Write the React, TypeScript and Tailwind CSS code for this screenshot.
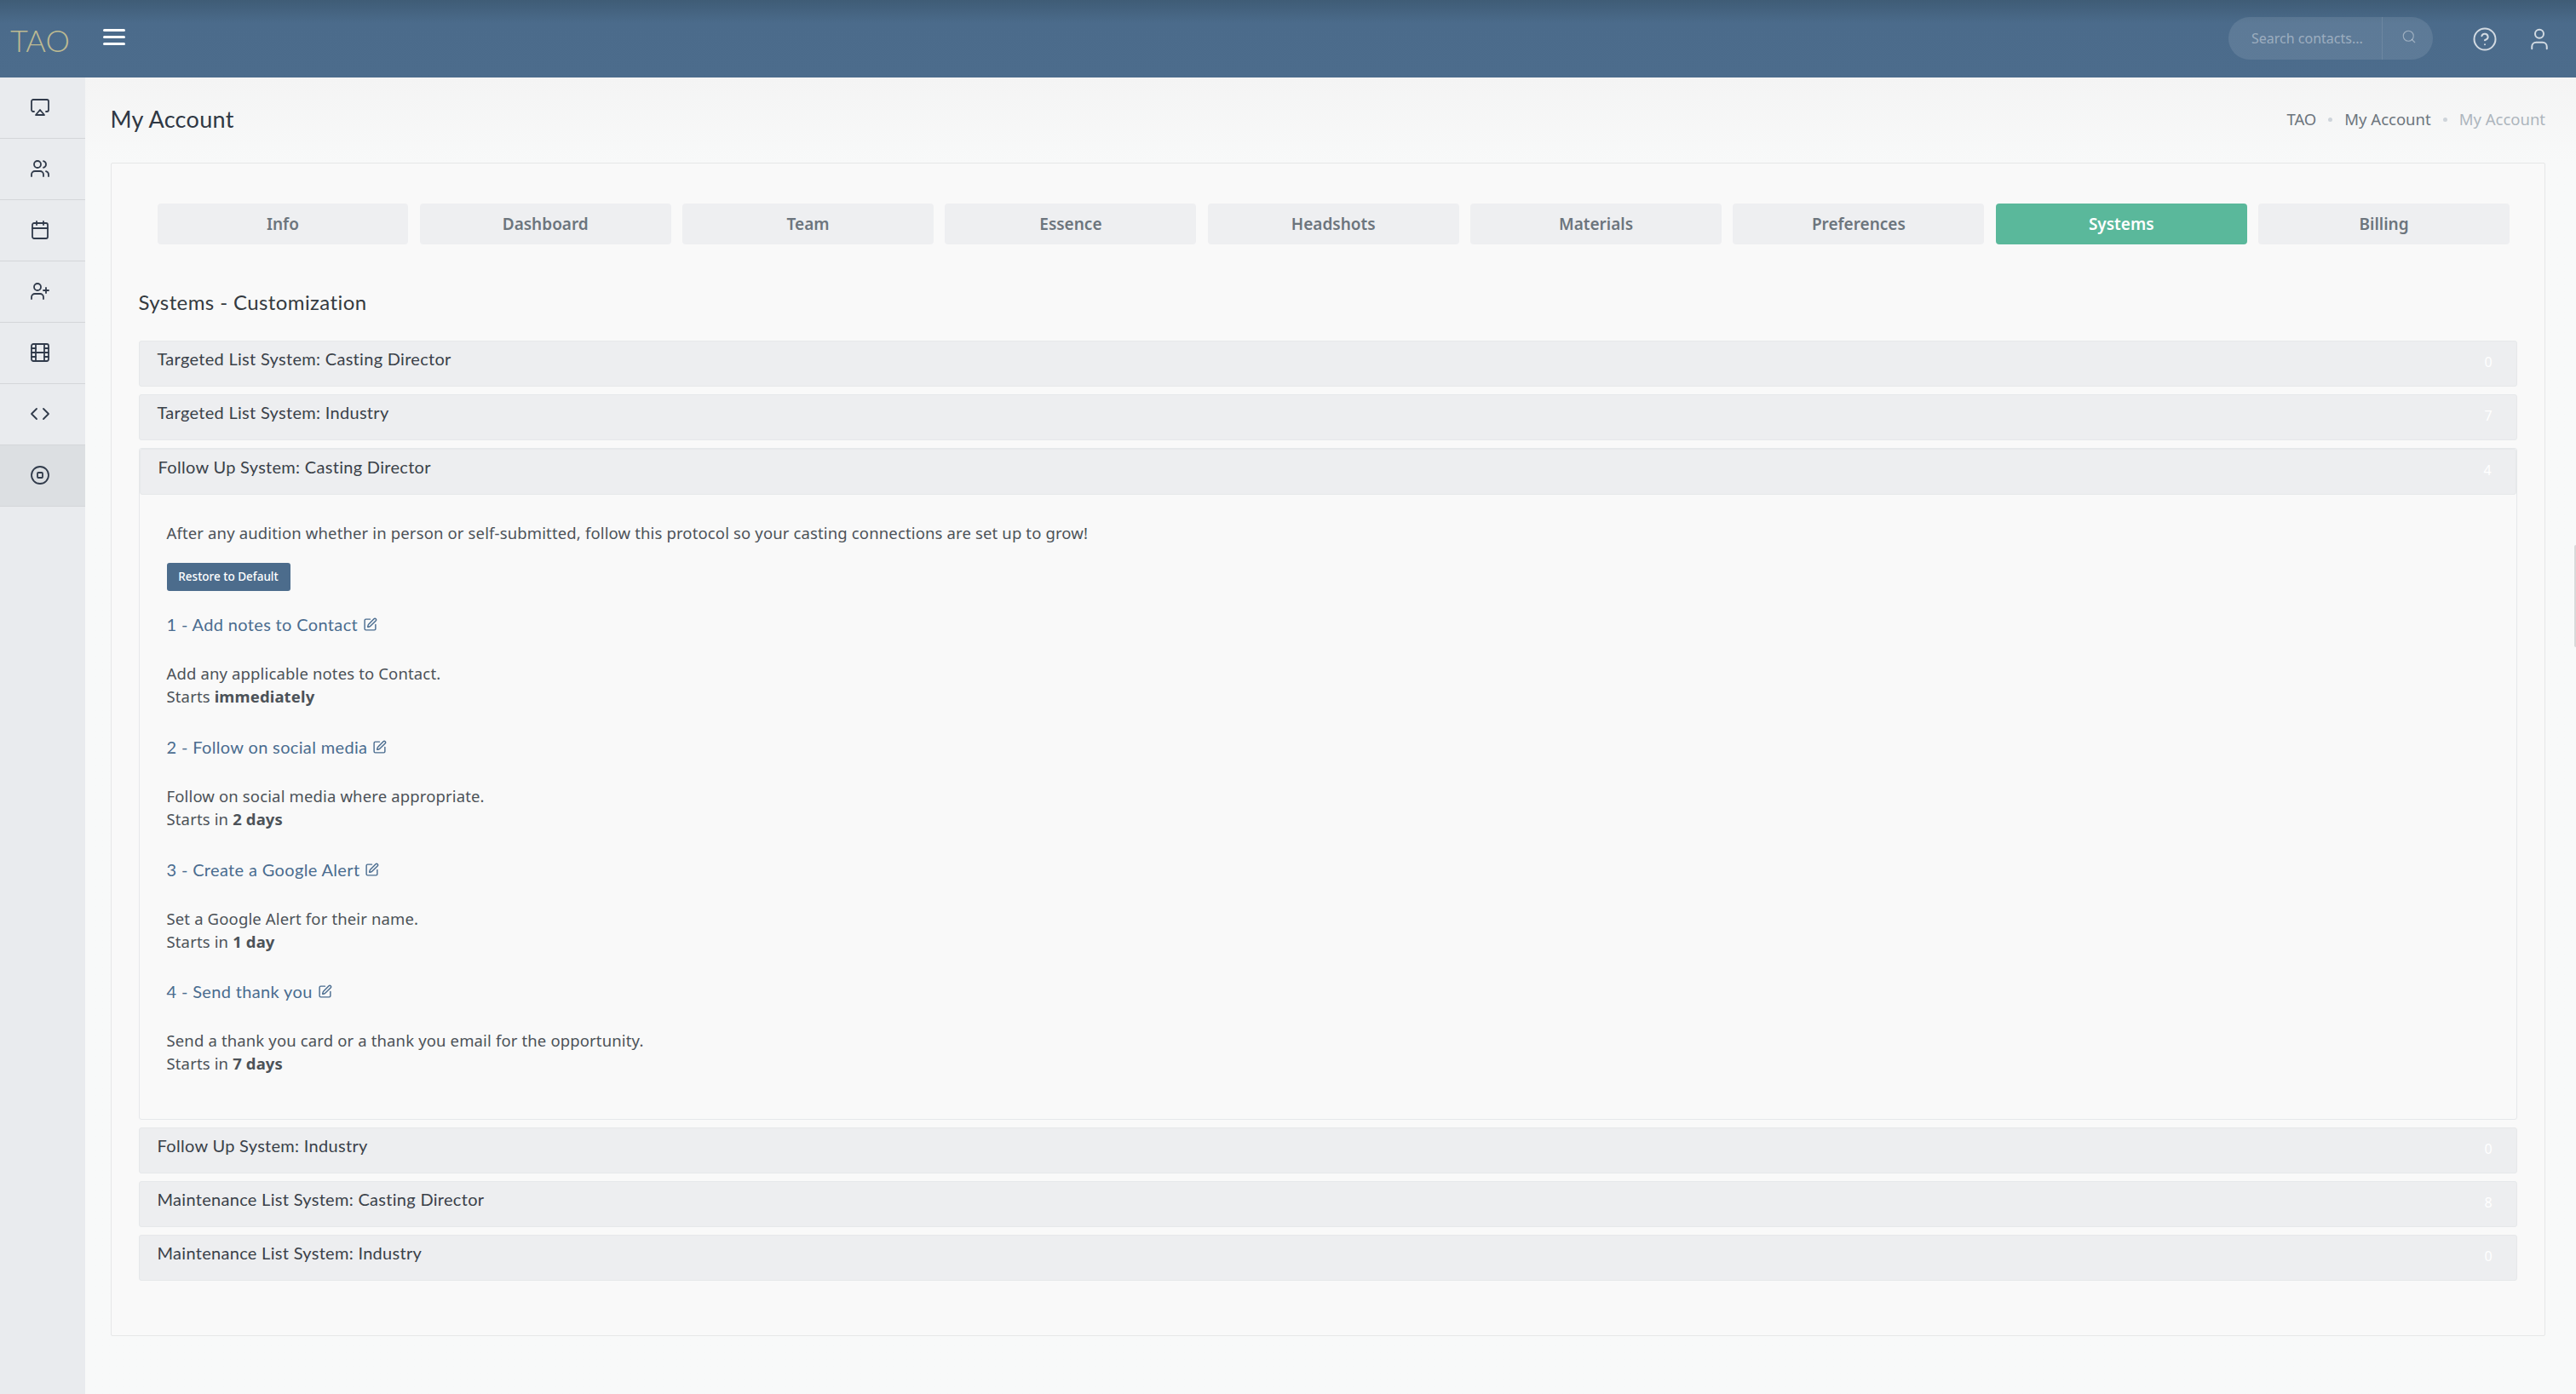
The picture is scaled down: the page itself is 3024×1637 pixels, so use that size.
import React from 'react';
import { Airplay, Calendar, CircleHelp, CircleStop, Code, Search, SquarePen, User, UserPlus, Users } from 'lucide-react';
import { FiFilm } from 'react-icons/fi';

const sideItems = [
  { icon: <Airplay size={24} strokeWidth={1.8} /> },
  { icon: <Users size={24} strokeWidth={1.8} /> },
  { icon: <Calendar size={24} strokeWidth={1.8} /> },
  { icon: <UserPlus size={24} strokeWidth={1.8} /> },
  { icon: <FiFilm size={24} strokeWidth={1.8} /> },
  { icon: <Code size={24} strokeWidth={1.8} /> },
  { icon: <CircleStop size={24} strokeWidth={1.8} />, active: true },
];

const tabs = ['Info', 'Dashboard', 'Team', 'Essence', 'Headshots', 'Materials', 'Preferences', 'Systems', 'Billing'];

const steps = [
  { title: '1 - Add notes to Contact', text: 'Add any applicable notes to Contact.', pre: 'Starts ', bold: 'immediately' },
  { title: '2 - Follow on social media', text: 'Follow on social media where appropriate.', pre: 'Starts in ', bold: '2 days' },
  { title: '3 - Create a Google Alert', text: 'Set a Google Alert for their name.', pre: 'Starts in ', bold: '1 day' },
  { title: '4 - Send thank you', text: 'Send a thank you card or a thank you email for the opportunity.', pre: 'Starts in ', bold: '7 days' },
];

const Row: React.FC<{ label: string; count: number }> = ({ label, count }) => (
  <div className="h-[54px] rounded-[3px] border border-[#e6e8ea] bg-[#edeef0] pl-[21px] pr-[28px] pt-[7px] flex justify-between text-[20px] leading-[27px] text-[#3a4149] [font-family:Lato,sans-serif] tracking-[0.3px]">
    <span>{label}</span>
    <span className="text-white [font-family:'Noto_Sans',sans-serif] text-[16px] pt-[4px]">{count}</span>
  </div>
);

export default function App() {
  return (
    <div className="relative h-[1637px] w-[3024px] overflow-hidden flex flex-col bg-[#f8f8f8] [font-family:'Noto_Sans',sans-serif]">
      <header className="h-[91px] shrink-0 flex items-center justify-between bg-linear-to-b from-[#3f5c76] via-[#4b6b8b] via-30% to-[#4c6c8c]">
        <div className="flex items-center">
          <span className="ml-[12px] mt-[2px] text-[36px] font-light text-[#bdba92] [font-family:Lato,sans-serif]">TAO</span>
          <div className="ml-[39px] -mt-[4px] w-[26px] flex flex-col gap-[5px]">
            <span className="h-[3px] bg-white rounded-full" />
            <span className="h-[3px] bg-white rounded-full" />
            <span className="h-[3px] bg-white rounded-full" />
          </div>
        </div>
        <div className="flex items-center">
          <div className="flex h-[50px] w-[240px] rounded-full bg-white/10 text-white/40 overflow-hidden -mt-[1px]">
            <div className="w-[181px] pl-[27px] text-[16px] leading-[50px] border-r border-white/10 whitespace-nowrap">Search contacts...</div>
            <div className="flex-1 flex items-center justify-center pl-[2px] pb-[4px]"><Search size={18} strokeWidth={1.5} /></div>
          </div>
          <CircleHelp size={30} strokeWidth={1.6} className="ml-[46px] text-white/75" />
          <User size={30} strokeWidth={1.6} className="ml-[34px] mr-[28px] text-white/75" />
        </div>
      </header>

      <div className="flex flex-1 min-h-0">
        <aside className="w-[100px] shrink-0 bg-[#e9ebee]">
          {sideItems.map((item, i) => (
            <div key={i} className={`h-[72px] flex items-center justify-center pr-[6px] pb-[1px] border-b border-[#d4d6d9] text-[#313b4b] ${item.active ? 'bg-[#dcdfe2]' : ''}`}>
              {item.icon}
            </div>
          ))}
        </aside>

        <main className="flex-1 pl-[29.5px] pr-[36px] bg-linear-to-b from-[#f4f4f4] to-[#f8f9f9] to-[100px]">
          <div className="h-[100px] flex items-center justify-between">
            <h1 className="text-[27px] text-[#2f3844] [font-family:Lato,sans-serif] tracking-[0.3px] -mt-[2px]">My Account</h1>
            <div className="flex items-center text-[18.5px] text-[#6c757d] -mt-[2px]">
              <span>TAO</span>
              <span className="mx-[14px] w-[5px] h-[5px] rounded-full bg-[#ced4da]" />
              <span>My Account</span>
              <span className="mx-[14px] w-[5px] h-[5px] rounded-full bg-[#ced4da]" />
              <span className="text-[#adb5bd]">My Account</span>
            </div>
          </div>

          <section className="h-[1378px] rounded-[2px] border border-[#e6e7e8] bg-[#f9f9f9] pl-[32px] pr-[32px] pt-[47px]">
            <div className="flex gap-[13.5px] pl-[22px] pr-[9px]">
              {tabs.map(t => (
                <div key={t} className={`flex-1 h-[48px] rounded-[4px] flex items-center justify-center font-semibold text-[19px] ${t === 'Systems' ? 'bg-[#5ab89b] text-white' : 'bg-[#eeeff1] text-[#6c757d]'}`}>{t}</div>
              ))}
            </div>

            <h2 className="mt-[50px] text-[24px] leading-[36px] text-[#343a40] [font-family:Lato,sans-serif] tracking-[0.4px]">Systems - Customization</h2>

            <div className="mt-[27px] flex flex-col gap-[9px]">
              <Row label="Targeted List System: Casting Director" count={0} />
              <Row label="Targeted List System: Industry" count={7} />
              <div className="rounded-[3px] border border-[#e6e8ea]">
                <Row label="Follow Up System: Casting Director" count={4} />
                <div className="pl-[32px] pt-[31px] pb-[19px] text-[18.5px] leading-[27px] text-[#4c5258] tracking-[0.14px]">
                  <p>After any audition whether in person or self-submitted, follow this protocol so your casting connections are set up to grow!</p>
                  <button className="mt-[22px] h-[33px] w-[145px] rounded-[3px] bg-[#4c6c8c] text-white text-[13.5px] font-medium tracking-normal">Restore to Default</button>
                  {steps.map(s => (
                    <div key={s.title} className="mt-[26px] mb-[32.8px]">
                      <div className="flex items-center gap-[6px] text-[20px] text-[#4a6c8f] [font-family:Lato,sans-serif] tracking-[0.35px]">
                        {s.title}
                        <SquarePen size={17} strokeWidth={2} />
                      </div>
                      <p className="mt-[30px]">{s.text}</p>
                      <p>{s.pre}<b className="font-bold">{s.bold}</b></p>
                    </div>
                  ))}
                </div>
              </div>
              <Row label="Follow Up System: Industry" count={0} />
              <Row label="Maintenance List System: Casting Director" count={8} />
              <Row label="Maintenance List System: Industry" count={0} />
            </div>
          </section>
        </main>
      </div>
      <div className="absolute right-0 top-[640px] h-[120px] w-[2px] rounded-l bg-[#d9d9d9]" />
    </div>
  );
}
